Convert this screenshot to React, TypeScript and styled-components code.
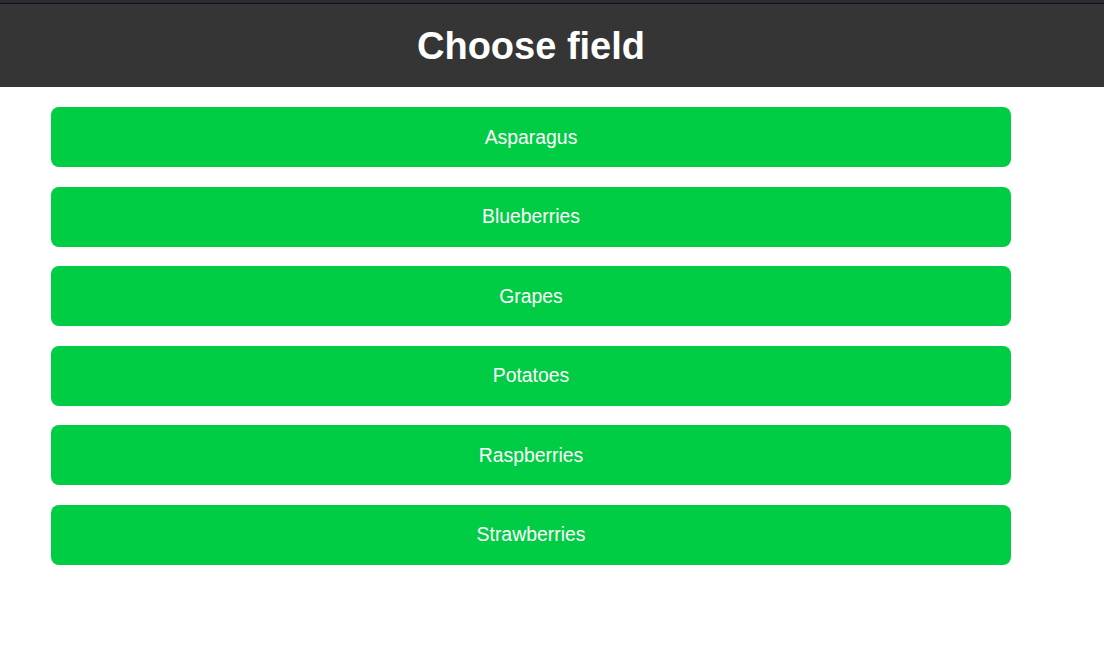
import styled, { createGlobalStyle } from "styled-components";

const GlobalStyle = createGlobalStyle`
  html, body {
    margin: 0;
    padding: 0;
    background: #ffffff;
    font-family: "Liberation Sans", Arial, sans-serif;
  }
`;

const Header = styled.header`
  height: 84px;
  background-color: #353535;
  border-top: 3px solid #2b2b33;
  box-shadow: inset 0 1px 0 #111111;
`;

const HeaderInner = styled.div`
  width: 1062px;
  height: 100%;
  display: flex;
  align-items: center;
  justify-content: center;
`;

const Title = styled.h1`
  margin: 0;
  padding-top: 2px;
  color: #ffffff;
  font-size: 38px;
  font-weight: 700;
`;

const FieldList = styled.div`
  width: 960px;
  margin-left: 51px;
  padding-top: 20px;
  display: flex;
  flex-direction: column;
  gap: 19.6px;
`;

const FieldButton = styled.button`
  height: 60px;
  width: 100%;
  border: none;
  border-radius: 8px;
  background-color: #00cc44;
  color: #ffffff;
  font-family: "Liberation Sans", Arial, sans-serif;
  font-size: 19.4px;
  cursor: pointer;
  display: flex;
  align-items: center;
  justify-content: center;
`;

const fields = ["Asparagus", "Blueberries", "Grapes", "Potatoes", "Raspberries", "Strawberries"];

export default function App() {
  return (
    <>
      <GlobalStyle />
      <Header>
        <HeaderInner>
          <Title>Choose field</Title>
        </HeaderInner>
      </Header>
      <FieldList>
        {fields.map((f) => (
          <FieldButton key={f}>{f}</FieldButton>
        ))}
      </FieldList>
    </>
  );
}
